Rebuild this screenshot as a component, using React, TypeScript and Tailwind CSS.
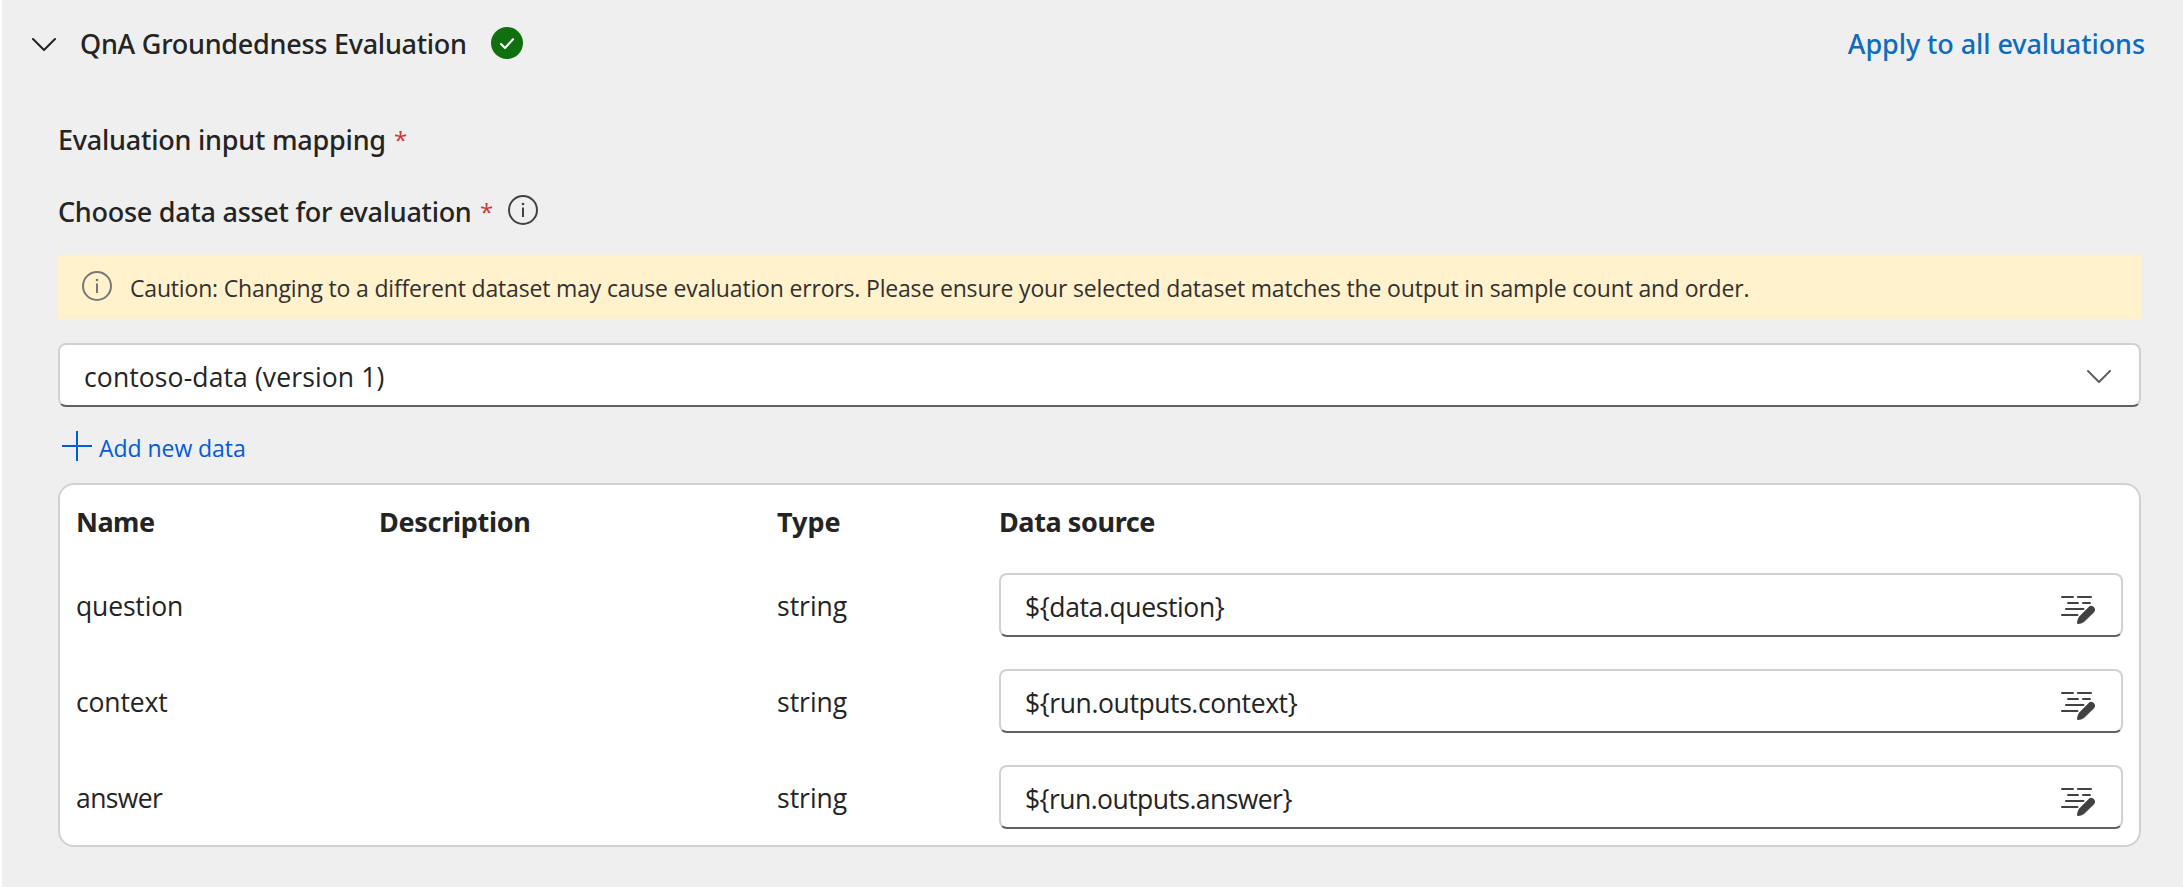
type Row = { name: string; type: string; source: string; tracking: string; nameTracking: string };

const rows: Row[] = [
  { name: "question", type: "string", source: "${data.question}", tracking: "tracking-[-0.38px]", nameTracking: "tracking-[-0.15px]" },
  { name: "context", type: "string", source: "${run.outputs.context}", tracking: "tracking-[-0.4px]", nameTracking: "tracking-[-0.15px]" },
  { name: "answer", type: "string", source: "${run.outputs.answer}", tracking: "tracking-[-0.55px]", nameTracking: "tracking-[-0.6px]" },
];

const field =
  "flex h-16 items-center rounded-lg border-2 border-[#d1d1d1] border-b-[#616161] bg-white";

function Chevron({ className }: { className: string }) {
  return (
    <svg className={className} viewBox="0 0 24 14" fill="none" stroke="currentColor" strokeWidth="2" strokeLinecap="round" strokeLinejoin="round">
      <path d="M1 1L12 12L23 1" />
    </svg>
  );
}

function InfoIcon({ className }: { className: string }) {
  return (
    <svg className={className} viewBox="0 0 30 30" fill="none" stroke="currentColor" strokeWidth="2">
      <circle cx="15" cy="15" r="14" />
      <path d="M15 12.5V22" />
      <circle cx="15" cy="9" r="1.3" fill="currentColor" stroke="none" />
    </svg>
  );
}

function EditLinesIcon() {
  return (
    <svg className="mt-2.5 h-7 w-[34px] shrink-0 text-[#424242]" viewBox="0 0 34 28" fill="none" stroke="currentColor" strokeWidth="2" strokeLinecap="round">
      <path d="M1 1H12M17 1H30M7 7H17M22 7H29M5 13H22.5M1 19H16.5" />
      <path d="M27.7 10.9Q30 8.8 32.8 11Q35.2 13.8 33.1 16.3L23 26.1Q20 28 17.3 28Q15.9 27.9 16 26.5Q16.2 23.5 18.2 20.6Z" fill="currentColor" stroke="none" />
    </svg>
  );
}

export default function App() {
  return (
    <div className="flex h-[887px] w-full flex-col border-l-2 border-white bg-[#efefef] pr-[42px] pl-14 font-['Open_Sans',sans-serif] text-[26.5px] leading-10 whitespace-nowrap text-[#242424]">
      <header className="-mr-1 -ml-[26px] flex h-[86px] shrink-0 items-center font-['Noto_Sans',sans-serif] text-[27px] font-medium">
        <Chevron className="mt-[3px] h-3.5 w-6" />
        <h1 className="ml-6 w-[411px] pt-0.5 tracking-[-0.26px]">QnA Groundedness Evaluation</h1>
        <svg className="h-8 w-8" viewBox="0 0 32 32">
          <circle cx="16" cy="16" r="16" fill="#107010" />
          <path d="M10 17L14 21L22 12.3" fill="none" stroke="#fff" strokeWidth="2" strokeLinecap="round" strokeLinejoin="round" />
        </svg>
        <a className="ml-auto pt-0.5 tracking-[-0.08px] text-[#0f6cbd]">Apply to all evaluations</a>
      </header>

      <div className="mt-[34px] flex h-10 items-center pr-2 font-['Noto_Sans',sans-serif] text-[27px] font-medium">
        <span className="w-[336px] tracking-[-0.22px]">Evaluation input mapping</span>
        <span className="font-['Open_Sans'] text-[24px] font-normal text-[#d13438]">*</span>
      </div>

      <div className="mt-8 flex h-10 items-center font-['Noto_Sans',sans-serif] text-[27px] font-medium">
        <span className="w-[422px] tracking-[-0.27px]">Choose data asset for evaluation</span>
        <span className="w-7 font-['Open_Sans'] text-[24px] text-[#d13438]">*</span>
        <InfoIcon className="-mt-1 h-[30px] w-[30px] text-[#424242]" />
      </div>

      <div className="mt-[23px] flex h-16 shrink-0 items-center bg-[#fff2cd] pl-6 text-[23px] text-[#323130]">
        <InfoIcon className="-mt-0.5 h-[30px] w-[30px] text-[#797775]" />
        <span className="ml-[18px] pt-[2px] tracking-[-0.175px]">
          Caution: Changing to a different dataset may cause evaluation errors. Please ensure your selected dataset matches the output in sample count and order.
        </span>
      </div>

      <div className={`${field} mt-6 shrink-0 justify-between pr-7 pl-6`}>
        <span className="pt-[3px] tracking-[0.12px]">contoso-data (version 1)</span>
        <Chevron className="mt-[3px] h-[14px] w-6 text-[#616161]" />
      </div>

      <a className="mt-[19px] flex h-10 shrink-0 items-center pl-1 text-[23px] text-[#015cda]">
        <svg className="h-[30px] w-[30px]" viewBox="0 0 30 30" fill="none" stroke="currentColor" strokeWidth="2">
          <path d="M15 0V30M0 15H30" />
        </svg>
        <span className="ml-[7px] pt-[3px] tracking-[-0.05px]">Add new data</span>
      </a>

      <section className="mt-[17px] h-[364px] shrink-0 rounded-2xl border-2 border-[#d1d1d1] bg-white pr-4 pl-[15px]">
        <div className="grid h-[72px] grid-cols-[303px_397px_224px_1fr] items-center pt-0.5 font-['Noto_Sans',sans-serif] text-[27px] font-bold">
          <span className="pl-px tracking-[-0.5px]">Name</span>
          <span className="pl-px tracking-[-0.3px]">Description</span>
          <span className="pl-[2px]">Type</span>
          <span className="tracking-[-0.4px]">Data source</span>
        </div>
        {rows.map((row) => (
          <div key={row.name} className="grid h-24 grid-cols-[303px_397px_224px_1fr] items-center">
            <span className={`pt-0.5 pl-px ${row.nameTracking}`}>{row.name}</span>
            <span />
            <span className="pt-0.5 pl-[2px]">{row.type}</span>
            <div className={`${field} justify-between pr-[26px] pl-6`}>
              <span className={`pt-[3px] ${row.tracking}`}>{row.source}</span>
              <EditLinesIcon />
            </div>
          </div>
        ))}
      </section>
    </div>
  );
}
